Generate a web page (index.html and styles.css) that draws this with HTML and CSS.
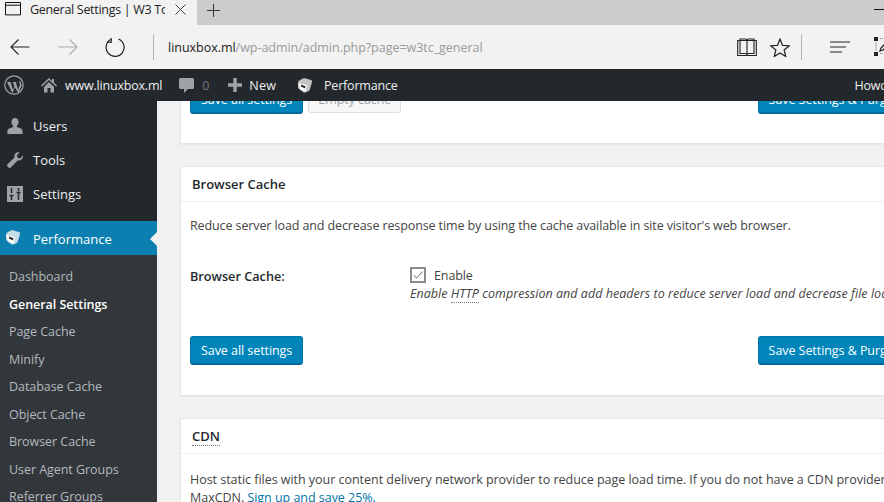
FILE: index.html
```html
<!DOCTYPE html>
<html lang="en">
<head>
<meta charset="utf-8">
<title>General Settings | W3 Total Cache</title>
<link rel="stylesheet" href="styles.css">
</head>
<body>
<div class="app">
  <div class="tabstrip">
    <div class="tab">
      <svg class="tab-icon" viewBox="0 0 16 14"><path d="M.5.5h15v12.400H.5zM.5 3.200h15" fill="none" stroke="#111"/></svg>
      <span class="tab-title">General Settings | W3 Total Cache</span>
      <svg class="tab-close" viewBox="0 0 11 11"><path d="M.5.5l10 10M10.500.5l-10 10" fill="none" stroke="#444"/></svg>
    </div>
    <svg class="tab-new" viewBox="0 0 13 13"><path d="M6.500 0v13M0 6.500h13" fill="none" stroke="#333"/></svg>
    <div class="window-min"></div>
  </div>
  <div class="addressbar">
    <svg class="nav nav-back" viewBox="0 0 20 16"><path d="M19.500 8H1M8.500.5L1 8l7.500 7.500" fill="none" stroke="#222" stroke-width="1.100"/></svg>
    <svg class="nav nav-forward" viewBox="0 0 20 16"><path d="M.5 8H19M11.500.5L19 8l-7.500 7.500" fill="none" stroke="#aaa" stroke-width="1.100"/></svg>
    <svg class="nav nav-reload" viewBox="0 0 20 20"><path d="M6 2.300A9 9 0 1 0 13.500 2M6.300 1l-.2 4.300L2 5" fill="none" stroke="#222" stroke-width="1.200"/></svg>
    <div class="divider divider-url"></div>
    <div class="url"><span class="url-host">linuxbox.ml</span>/wp-admin/admin.php?page=w3tc_general</div>
    <svg class="tool tool-book" viewBox="0 0 20 19"><path d="M.7 2.500h18.600v15H.7zM3 2.500V1h5.500c.8 0 1.500.7 1.500 1.500V16M17 2.500V1h-5.500c-.8 0-1.500.7-1.500 1.500M3 2.500V15.500h5.500c.8 0 1.500.5 1.500 1.500 0-1 .7-1.500 1.500-1.500H17V2.500" fill="none" stroke="#222" stroke-width="1.100"/></svg>
    <svg class="tool tool-star" viewBox="0 0 20 19"><path d="M10 1l2.500 6.300 6.800.4-5.200 4.300 1.700 6.500L10 15l-5.800 3.500L5.900 12 .7 7.700l6.800-.4z" fill="none" stroke="#222" stroke-width="1.200"/></svg>
    <div class="divider divider-tools"></div>
    <svg class="tool tool-hub" viewBox="0 0 20 12"><path d="M0 1h20M0 6h16M0 11h12" fill="none" stroke="#222" stroke-width="1.100"/></svg>
    <svg class="tool tool-note" viewBox="0 0 20 20"><path d="M0 0h4v4H0zM0 15h4v4H0z" fill="#222"/><path d="M2 5.500v8.500" fill="none" stroke="#555" stroke-dasharray="1 1"/><path d="M6 1.500h8M6 16.500h8" fill="none" stroke="#777" stroke-dasharray="1 1"/><path d="M6 14l1-3 6-6 2 2-6 6z" fill="none" stroke="#222" stroke-width="1.300"/></svg>
  </div>
  <div class="adminbar">
    <svg class="ab-wp" viewBox="0 0 20 20"><circle cx="10" cy="10" r="9.200" fill="none" stroke="#9ea3a8" stroke-width="1.200"/><path d="M3 7h4.500l-.9.500L9 15l1.300-3.600-1.200-3.900-.9-.5h4.700l-1 .5L14.200 15l1.600-5c.4-1.300-.3-2-.7-2.700-.3-.6.2-1.300 1-1.300L17.800 10 14.500 18.200 10.800 12.300 8.500 18.300z" fill="#9ea3a8"/></svg>
    <svg class="ab-home" viewBox="0 0 16 16"><path d="M8 1L0 8.500l1 1L8 3l7 6.500 1-1-3-2.800V2h-2v2z M3 10l5-5 5 5v5.500H9.500V11h-3v4.500H3z" fill="#9ea3a8"/></svg>
    <span class="ab-text ab-site">www.linuxbox.ml</span>
    <svg class="ab-comment" viewBox="0 0 15 15"><path d="M1.500 0h12c.8 0 1.500.7 1.500 1.500v8c0 .8-.7 1.500-1.500 1.500H9l-4 4v-4H1.500C.7 11 0 10.300 0 9.500v-8C0 .7.700 0 1.500 0z" fill="#9ea3a8"/></svg>
    <span class="ab-count">0</span>
    <svg class="ab-plus" viewBox="0 0 14 14"><path d="M5.300 0h3.400v5.300H14v3.400H8.700V14H5.300V8.700H0V5.300h5.300z" fill="#9ea3a8"/></svg>
    <span class="ab-text ab-new">New</span>
    <svg class="ab-w3" viewBox="0 0 16 16"><path d="M7 1l7 2q1.500.5 1 2l-2 7q-.5 1.500-2 2.500l-3 1q-1 .3-2-.5l-4-3q-1-1-1-2V6q0-2 2-3z" fill="#c4c4c4"/><path d="M1.500 6L10 8.300 8.500 15 3 12z" fill="#fff"/><path d="M4 7.500l4.500 1.700-.5 2.300-4-2z" fill="#2a2a2a"/></svg>
    <span class="ab-text ab-perf">Performance</span>
    <span class="ab-text ab-howdy">Howdy, admin</span>
  </div>
  <div class="workspace">
    <nav class="sidebar">
      <ul class="menu">
        <li class="menu-item">
          <svg class="menu-icon" viewBox="0 0 16 17"><path d="M8 0c2.300 0 3.800 1.800 3.800 4.200 0 1.800-.8 3.400-2 4.300 0 .7.200 1.100.8 1.300 2.500.8 5.400 1.500 5.400 3.700V17H0v-3.500c0-2.200 2.900-2.900 5.400-3.700.6-.2.800-.6.800-1.300-1.200-.9-2-2.500-2-4.300C4.200 1.800 5.700 0 8 0z" fill="#9ea3a8"/></svg>
          <span>Users</span>
        </li>
        <li class="menu-item">
          <svg class="menu-icon" viewBox="0 0 17 17"><path d="M16.700 3.500c.4 1.800-.1 3.400-1.300 4.500-1.200 1.100-2.800 1.400-4.200.9L4.300 16.300c-.8.800-2 .8-2.900 0l-.7-.7c-.8-.8-.8-2 0-2.900l7.300-6.900c-.5-1.400-.2-3 .9-4.200C10 .5 11.700 0 13.400.4L10.600 3.200l.7 2.900 2.800.7z" fill="#9ea3a8"/></svg>
          <span>Tools</span>
        </li>
        <li class="menu-item">
          <svg class="menu-icon" viewBox="0 0 16 16"><path d="M0 0h16v16H0z" fill="#9ea3a8"/><path d="M4.500 2v5M2.500 9.500h4M4.500 9.500V14M11.500 2v3M9.500 6.500h4M11.500 6.500V14" fill="none" stroke="#23282d" stroke-width="1.500"/></svg>
          <span>Settings</span>
        </li>
        <li class="menu-item menu-current">
          <svg class="menu-icon menu-icon-w3" viewBox="0 0 16 16"><path d="M7 1l7 2q1.500.5 1 2l-2 7q-.5 1.500-2 2.500l-3 1q-1 .3-2-.5l-4-3q-1-1-1-2V6q0-2 2-3z" fill="#c4dbe8"/><path d="M1.500 6L10 8.300 8.500 15 3 12z" fill="#fff"/><path d="M4 7.500l4.500 1.700-.5 2.300-4-2z" fill="#2a2a2a"/></svg>
          <span class="menu-current-label">Performance</span>
        </li>
      </ul>
      <ul class="submenu">
        <li>Dashboard</li>
        <li class="submenu-current">General Settings</li>
        <li>Page Cache</li>
        <li>Minify</li>
        <li>Database Cache</li>
        <li>Object Cache</li>
        <li>Browser Cache</li>
        <li>User Agent Groups</li>
        <li>Referrer Groups</li>
      </ul>
    </nav>
    <main class="content">
      <section class="card card-first">
        <div class="actions actions-first">
          <button class="btn btn-primary">Save all settings</button>
          <button class="btn btn-disabled">Empty cache</button>
          <button class="btn btn-primary btn-right">Save Settings &amp; Purge Caches</button>
        </div>
      </section>
      <section class="card">
        <h2 class="card-title">Browser Cache</h2>
        <div class="card-body">
          <p class="intro">Reduce server load and decrease response time by using the cache available in site visitor's web browser.</p>
          <div class="field">
            <div class="field-label">Browser Cache:</div>
            <div class="field-value">
              <label class="check"><span class="checkbox"><svg viewBox="0 0 11 9"><path d="M.5 4.500L4 8l6.500-7.500" fill="none" stroke="#555"/></svg></span>Enable</label>
              <div class="desc">Enable <span class="abbr">HTTP</span> compression and add headers to reduce server load and decrease file load time.</div>
            </div>
          </div>
          <div class="actions">
            <button class="btn btn-primary">Save all settings</button>
            <button class="btn btn-primary btn-right">Save Settings &amp; Purge Caches</button>
          </div>
        </div>
      </section>
      <section class="card">
        <h2 class="card-title"><span class="abbr">CDN</span></h2>
        <div class="card-body">
          <p class="intro intro-cdn">Host static files with your content delivery network provider to reduce page load time. If you do not have a CDN provider, try<br>MaxCDN. <a class="link" href="#">Sign up and save 25%.</a></p>
        </div>
      </section>
    </main>
  </div>
</div>
</body>
</html>
```
FILE: styles.css
```css
* { box-sizing: border-box; }
html, body { margin: 0; padding: 0; height: 100%; overflow: hidden; }
body { font-family: "Open Sans", "Noto Sans", sans-serif; font-size: 12.5px; letter-spacing: -0.11px; color: #444; }
ul { list-style: none; margin: 0; padding: 0; }

.app { width: 884px; height: 502px; display: flex; flex-direction: column; overflow: hidden; }

.tabstrip { height: 25px; flex: none; background: #cccccc; display: flex; align-items: center; }
.tab { width: 197px; height: 25px; background: #f2f2f2; display: flex; align-items: center; padding-left: 5px; }
.tab-icon { width: 16px; height: 14px; flex: none; margin-bottom: 7px; }
.tab-title { width: 135px; margin-left: 9px; overflow: hidden; white-space: nowrap; font-size: 12.5px; letter-spacing: -0.3px; color: #222; margin-bottom: 6px; }
.tab-close { width: 11px; height: 11px; margin-left: 10px; margin-bottom: 7px; }
.tab-new { width: 13px; height: 13px; margin-left: 10px; margin-bottom: 5px; flex: none; }
.window-min { width: 10px; height: 1px; background: #111; margin-left: auto; margin-bottom: 7px; }

.addressbar { height: 44px; flex: none; background: #f2f2f2; display: flex; align-items: center; }
.nav { flex: none; }
.nav-back { width: 20px; height: 16px; margin-left: 10px; }
.nav-forward { width: 20px; height: 16px; margin-left: 28px; }
.nav-reload { width: 20px; height: 20px; margin-left: 27px; }
.divider { width: 1px; height: 26px; background: #b5b5b5; flex: none; }
.divider-url { margin-left: 28px; }
.url { margin-left: 14px; width: 560px; flex: none; font-size: 12.5px; letter-spacing: -0.03px; color: #9a9a9a; white-space: nowrap; }
.url-host { color: #222; }
.tool { flex: none; }
.tool-book { width: 20px; height: 19px; margin-left: 9px; }
.tool-star { width: 20px; height: 19px; margin-left: 13px; }
.divider-tools { margin-left: 11px; }
.tool-hub { width: 20px; height: 12px; margin-left: 28px; }
.tool-note { width: 20px; height: 20px; margin-left: 24px; }

.adminbar { height: 32px; flex: none; background: #23282d; display: flex; align-items: center; color: #eee; white-space: nowrap; }
.ab-text { font-size: 12.5px; letter-spacing: -0.2px; color: #eeeeee; }
.ab-wp { width: 20px; height: 20px; margin-left: 4px; flex: none; }
.ab-home { width: 16px; height: 16px; margin-left: 17px; flex: none; }
.ab-site { margin-left: 8px; }
.ab-comment { width: 15px; height: 15px; margin-left: 17px; flex: none; }
.ab-count { margin-left: 8px; color: #777; }
.ab-plus { width: 14px; height: 14px; margin-left: 19px; flex: none; }
.ab-new { margin-left: 7px; letter-spacing: 0.2px; }
.ab-w3 { width: 16px; height: 16px; margin-left: 21px; flex: none; }
.ab-perf { margin-left: 11px; }
.ab-howdy { margin-left: 457px; }

.workspace { flex: 1; min-height: 0; display: flex; overflow: hidden; background: #f1f1f1; }
.sidebar { width: 157px; flex: none; background: #23282d; overflow: hidden; }
.menu { padding-top: 8px; }
.menu-item { height: 34px; display: flex; align-items: center; padding-left: 7px; color: #eeeeee; font-size: 13px; letter-spacing: 0; position: relative; }
.menu-icon { width: 16px; height: 16px; flex: none; margin-right: 10px; }
.menu-current { background: #0a7fb0; color: #fff; margin-top: 10px; height: 34px; padding-left: 5px; }
.menu-current::after { content: ""; position: absolute; right: 0; top: 11px; border: 7px solid transparent; border-left: 0; border-right-color: #f1f1f1; }
.menu-icon-w3 { margin-right: 12px; margin-bottom: 2px; }
.menu-current-label { padding-top: 2px; }
.submenu { background: #32373c; padding-top: 8px; height: 260px; }
.submenu li { height: 27.550px; line-height: 27.550px; padding-left: 9px; color: #b4b9be; font-size: 12.500px; letter-spacing: -0.05px; white-space: nowrap; }
.submenu li.submenu-current { color: #fff; font-weight: 600; }

.content { flex: 1; min-width: 0; overflow: hidden; padding-left: 23px; }
.card { width: 779px; background: #fff; border: 1px solid #e5e5e5; box-shadow: 0 1px 1px rgba(0,0,0,.04); margin-bottom: 22px; }
.card-first { margin-top: -27px; height: 70px; border-top: 0; padding: 11px 9px 0; }
.card-title { margin: 0; height: 35px; line-height: 34px; padding-left: 11px; font-size: 13px; letter-spacing: 0; font-weight: 600; color: #23282d; border-bottom: 1px solid #eee; }
.card-body { padding: 14px 9px 0; }
.intro { margin: 0; font-size: 12.500px; line-height: 20px; color: #444; white-space: nowrap; }
.intro-cdn { line-height: 18px; padding-top: 3px; letter-spacing: -0.03px; }
.field { display: flex; margin-top: 31px; }
.field-label { width: 220px; font-weight: 600; font-size: 12.700px; letter-spacing: 0; color: #23282d; line-height: 18px; }
.field-value { min-width: 0; flex: 1; }
.check { display: flex; align-items: center; height: 18px; line-height: 18px; }
.checkbox { width: 16px; height: 16px; border: 2px solid #8a8a8a; background: #fff; margin-right: 8px; margin-bottom: 2px; display: flex; align-items: center; justify-content: center; }
.checkbox svg { width: 10px; height: 8px; }
.desc { font-style: italic; font-size: 12.500px; letter-spacing: 0.03px; line-height: 18px; white-space: nowrap; }
.abbr { border-bottom: 1px dotted #777; }
.actions { display: flex; margin-top: 33px; height: 29px; margin-bottom: 30px; }
.actions-first { margin: 0; }
.btn { height: 29px; font-family: inherit; font-size: 12.500px; letter-spacing: -0.06px; border-radius: 3px; padding: 0 10px; white-space: nowrap; }
.btn-primary { background: #0085ba; border: 1px solid #0077a8; border-bottom: 2px solid #006799; color: #fff; }
.btn-disabled { background: #f7f7f7; border: 1px solid #ddd; color: #a0a5aa; margin-left: 5px; height: 28px; padding: 0 9px; }
.btn-right { margin-left: auto; }
.link { color: #0073aa; text-decoration: none; }
```
